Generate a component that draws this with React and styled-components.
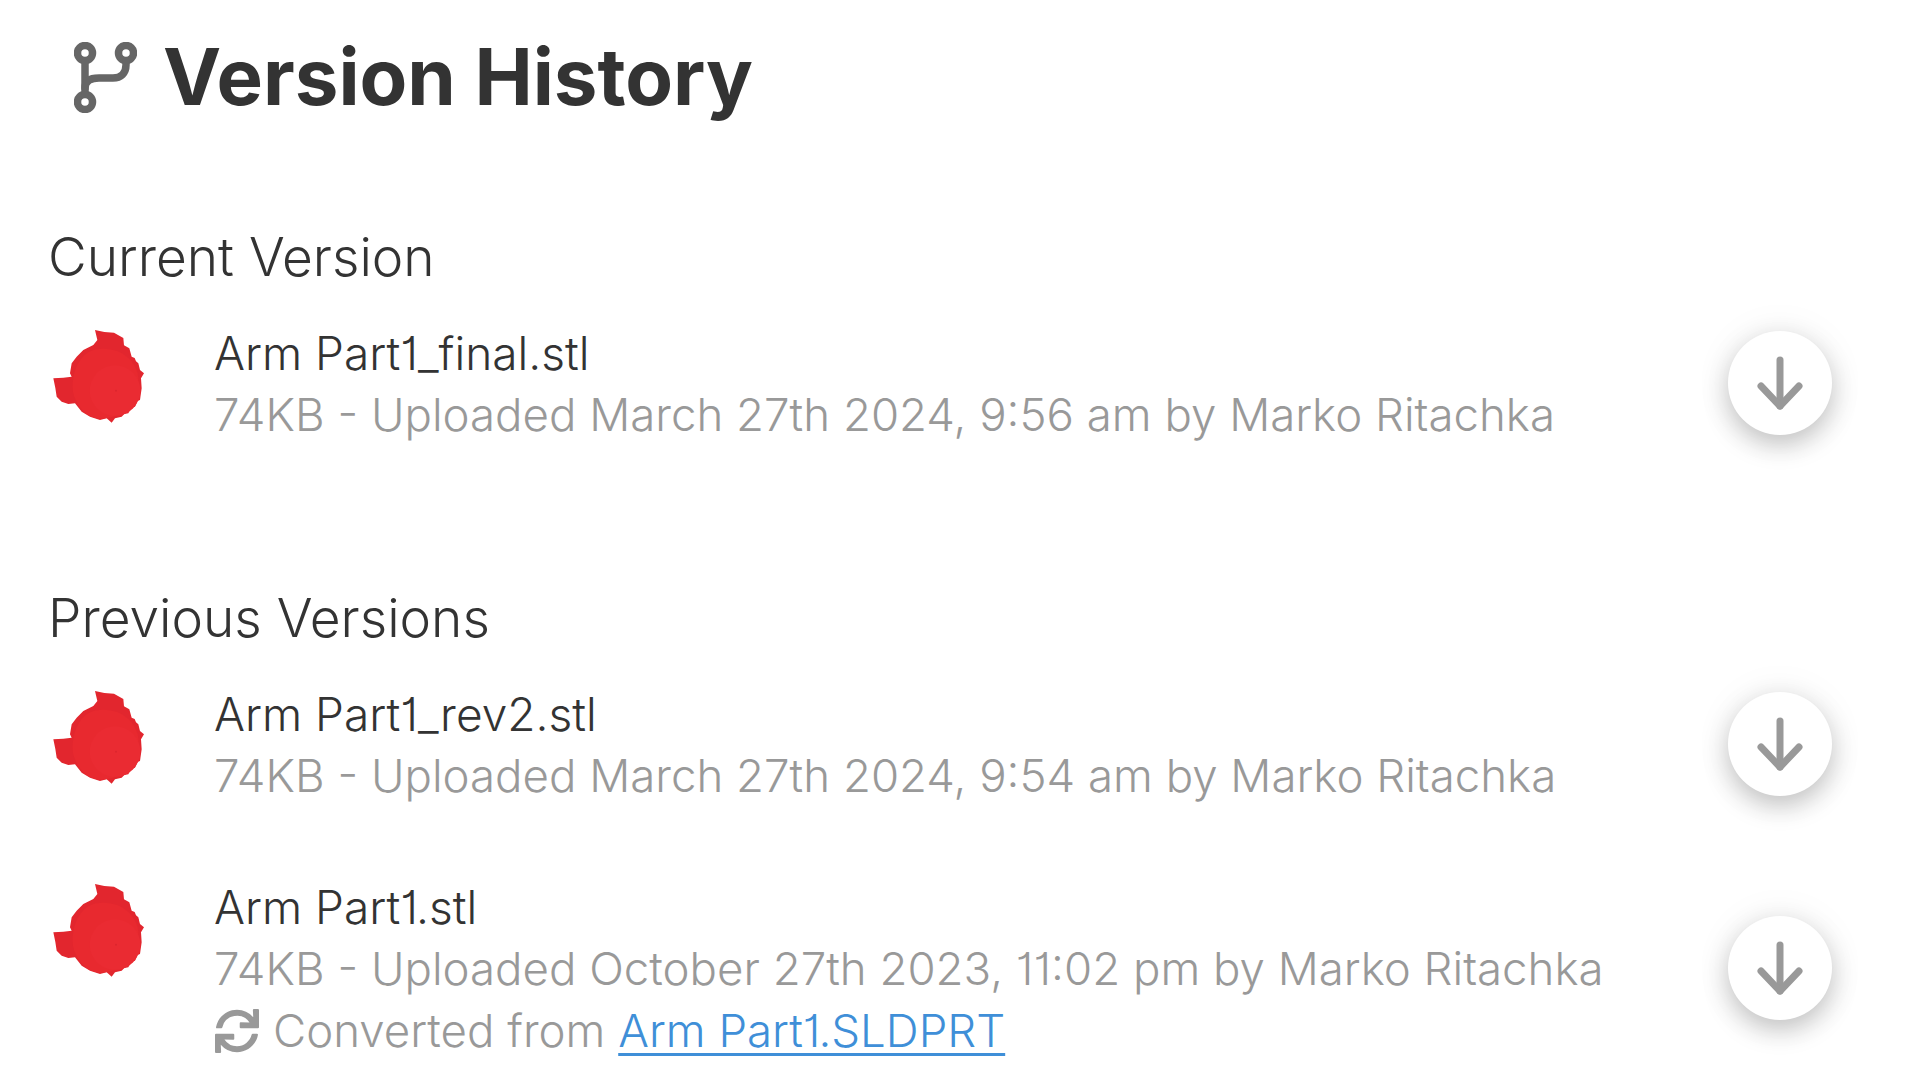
import styled, { createGlobalStyle } from "styled-components";
import { FaSync } from "react-icons/fa";

const GlobalStyle = createGlobalStyle`
  html, body {
    margin: 0;
    background: #fff;
    overflow: hidden;
  }
`;

const versions = {
  current: [
    { name: "Arm Part1_final.stl", meta: "74KB - Uploaded March 27th 2024, 9:56 am by Marko Ritachka" },
  ],
  previous: [
    { name: "Arm Part1_rev2.stl", meta: "74KB - Uploaded March 27th 2024, 9:54 am by Marko Ritachka" },
    {
      name: "Arm Part1.stl",
      meta: "74KB - Uploaded October 27th 2023, 11:02 pm by Marko Ritachka",
      convertedFrom: "Arm Part1.SLDPRT",
    },
  ],
};

const BranchIcon = () => (
  <HeaderIcon viewBox="0 0 63 71" fill="none" stroke="#666" strokeWidth="7.5" strokeLinecap="round">
    <circle cx="11" cy="11" r="7.5" />
    <circle cx="52" cy="11" r="7.5" />
    <circle cx="11" cy="60" r="7.5" />
    <path d="M11 19v33" />
    <path d="M52 19v4c0 8-5 13-13 13H25c-9 0-14 3-14 10" />
  </HeaderIcon>
);

const PartThumb = () => (
  <Thumb viewBox="30 6 300 330">
    <path
      fill="#e2262e"
      d="M165 30l28 6 29 2 28 16 2 22 16 9 7 25 9 4 4 10 7 6 5 20 12 10-9 15 2 30-5 35-8 3-7 17-12 4-8 16-12 2-8 8-20 5-10 13-15-13-20 5-30-10-25-15-20-25-20 2-20-7-15-15-4-26-6-29 30-2 25-3-5-10 5-30 15-20 20-20 30-15 12-15z"
    />
    <path
      fill="#e8292f"
      d="M145 96c22-12 58-14 88-2 32 13 58 42 62 78 3 42-18 84-52 108-30 18-70 22-100 4-20-14-38-38-44-68-6-46 10-96 46-120z"
    />
    <circle cx="225" cy="212" r="76" fill="#ea2b32" />
    <circle cx="228" cy="212" r="3" fill="#c91f27" opacity="0.4" />
  </Thumb>
);

const VersionRow = ({ version }) => (
  <Row>
    <PartThumb />
    <Info>
      <FileName>{version.name}</FileName>
      <Meta>{version.meta}</Meta>
      {version.convertedFrom && (
        <Meta>
          <SyncIcon />
          Converted from <FileLink href="#">{version.convertedFrom}</FileLink>
        </Meta>
      )}
    </Info>
    <DownloadButton aria-label="Download">
      <svg width="46" height="54" viewBox="0 0 46 54" fill="none" stroke="#999" strokeWidth="7" strokeLinecap="round" strokeLinejoin="round">
        <path d="M23 4v46" />
        <path d="M4 30l19 20 19-20" />
      </svg>
    </DownloadButton>
  </Row>
);

export default function App() {
  return (
    <Page>
      <GlobalStyle />
      <Header>
        <BranchIcon />
        <Title>Version History</Title>
      </Header>
      <CurrentSection>
        <SectionTitle>Current Version</SectionTitle>
        <RowList>
          {versions.current.map((v) => (
            <VersionRow key={v.name} version={v} />
          ))}
        </RowList>
      </CurrentSection>
      <PreviousSection>
        <SectionTitle>Previous Versions</SectionTitle>
        <RowList>
          {versions.previous.map((v) => (
            <VersionRow key={v.name} version={v} />
          ))}
        </RowList>
      </PreviousSection>
    </Page>
  );
}

const Page = styled.div`
  width: 1920px;
  height: 1080px;
  box-sizing: border-box;
  padding: 35px 0 0 48px;
  background: #fff;
  font-family: Inter, "Liberation Sans", sans-serif;
  font-feature-settings: "cv01" 1;
  overflow: hidden;
`;

const Header = styled.div`
  display: flex;
  align-items: center;
  gap: 26px;
  height: 84px;
  padding-left: 26px;
`;

const HeaderIcon = styled.svg`
  flex: none;
  width: 63px;
  height: 71px;
`;

const Title = styled.h1`
  margin: 0;
  font-size: 78px;
  line-height: 84px;
  font-weight: 700;
  color: #333;
`;

const CurrentSection = styled.section`
  margin-top: 108px;
`;

const PreviousSection = styled.section`
  margin-top: 142px;
`;

const SectionTitle = styled.h2`
  margin: 0 0 35px;
  font-size: 53.2px;
  line-height: 60px;
  font-weight: 300;
  color: #333;
`;

const RowList = styled.div`
  display: flex;
  flex-direction: column;
  gap: 69px;
`;

const Row = styled.div`
  display: flex;
  align-items: center;
  width: 1784px;
`;

const Thumb = styled.svg`
  flex: none;
  align-self: flex-start;
  width: 100px;
  height: 110px;
  margin-left: 2px;
  margin-right: 64px;
  filter: blur(0.7px);
`;

const Info = styled.div`
  flex: 1;
  min-width: 0;
`;

const FileName = styled.div`
  font-size: 46px;
  line-height: 62px;
  font-weight: 300;
  color: #333;
`;

const Meta = styled.div`
  font-size: 45.6px;
  line-height: 62px;
  font-weight: 300;
  color: #999;
`;

const SyncIcon = styled(FaSync)`
  width: 44px;
  height: 44px;
  margin-right: 14px;
  margin-left: 1px;
  vertical-align: -6px;
  color: #999;
`;

const FileLink = styled.a`
  color: #3f8fd8;
  text-decoration: underline;
  text-decoration-thickness: 3px;
  text-underline-offset: 6px;
`;

const DownloadButton = styled.button`
  flex: none;
  width: 104px;
  height: 104px;
  margin-top: -2px;
  padding: 0;
  border: none;
  border-radius: 50%;
  background: #fff;
  display: flex;
  align-items: center;
  justify-content: center;
  box-shadow: 0 10px 26px rgba(0, 0, 0, 0.22), 0 0 40px rgba(0, 0, 0, 0.06);
`;
